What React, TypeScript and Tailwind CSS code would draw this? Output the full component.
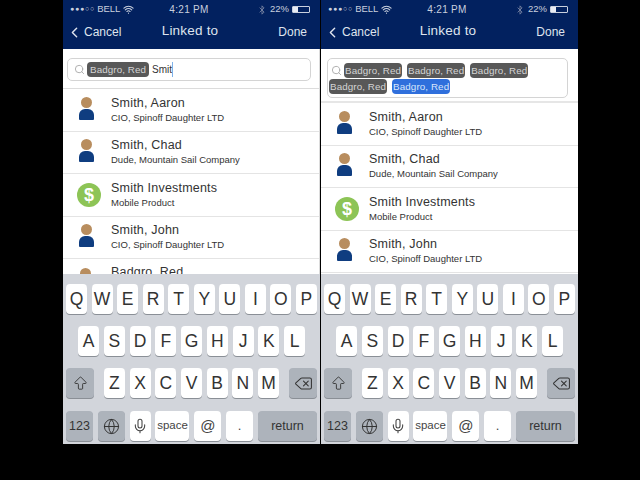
import { ArrowBigUp, Bluetooth, ChevronLeft, Delete, Globe, Mic, Search, Wifi } from "lucide-react";

const ROWS = [
  { name: "Smith, Aaron", sub: "CIO, Spinoff Daughter LTD", kind: "person" },
  { name: "Smith, Chad", sub: "Dude, Mountain Sail Company", kind: "person" },
  { name: "Smith Investments", sub: "Mobile Product", kind: "money" },
  { name: "Smith, John", sub: "CIO, Spinoff Daughter LTD", kind: "person" },
];

function Person() {
  return (
    <div className="-mt-[3px] flex w-[24px] flex-col items-center">
      <div className="h-[11px] w-[11px] rounded-full bg-[#b88d5e]" />
      <div className="mt-[1px] h-[11px] w-[15px] rounded-t-[6px] rounded-b-[1px] bg-[#0f3d80]" />
    </div>
  );
}

function Money() {
  return (
    <div className="ml-[3px] flex h-[24px] w-[24px] items-center justify-center rounded-full bg-[#8dc456] text-[18px] leading-none font-bold text-white">
      $
    </div>
  );
}

function Chip({ active, tight }: { active?: boolean; tight?: boolean }) {
  return (
    <span
      className={`rounded-[4px] text-[9.8px] leading-[15px] tracking-[0.1px] ${tight ? "px-[1px]" : "px-[3px]"} ${
        active ? "bg-[#2f6fdc] text-[#d8e6fb]" : "bg-[#585858] text-[#d4d4d4]"
      }`}
    >
      Badgro, Red
    </span>
  );
}

function Key({ label }: { label: string }) {
  return (
    <div className="flex h-[30px] w-[21px] items-center justify-center rounded-[4px] bg-white text-[17.5px] text-[#333] shadow-[0_1px_0_#8a8f96]">
      {label}
    </div>
  );
}

function KeyRow({ keys }: { keys: string }) {
  return (
    <>
      {keys.split("").map((k) => (
        <Key key={k} label={k} />
      ))}
    </>
  );
}

function Keyboard() {
  const dark = "flex h-[30px] items-center justify-center rounded-[4px] bg-[#adb3bb] text-[#333] shadow-[0_1px_0_#8a8f96]";
  const light = "flex h-[30px] items-center justify-center rounded-[4px] bg-white text-[#444] shadow-[0_1px_0_#8a8f96]";
  return (
    <div className="flex h-[170px] shrink-0 flex-col bg-[#d2d5db] pt-[10px]">
      <div className="flex justify-between px-[3px]">
        <KeyRow keys="QWERTYUIOP" />
      </div>
      <div className="mt-[12px] flex justify-between px-[15px]">
        <KeyRow keys="ASDFGHJKL" />
      </div>
      <div className="mt-[12px] flex items-center justify-between px-[3px]">
        <div className={`${dark} w-[28px]`}>
          <ArrowBigUp size={17} strokeWidth={1.3} />
        </div>
        <div className="flex gap-[4.7px]">
          <KeyRow keys="ZXCVBNM" />
        </div>
        <div className={`${dark} w-[28px]`}>
          <Delete size={19} strokeWidth={1.3} />
        </div>
      </div>
      <div className="mt-[13px] flex justify-between px-[3px]">
        <div className={`${dark} w-[27px] text-[12.5px]`}>123</div>
        <div className={`${dark} w-[27px]`}>
          <Globe size={17} strokeWidth={1.4} />
        </div>
        <div className={`${light} w-[21px]`}>
          <Mic size={16} strokeWidth={1.6} />
        </div>
        <div className={`${light} w-[34px] text-[11.5px]`}>space</div>
        <div className={`${light} w-[27px] text-[15px]`}>@</div>
        <div className={`${light} w-[27px] text-[13px]`}>.</div>
        <div className={`${dark} w-[59px] text-[12.5px]`}>return</div>
      </div>
    </div>
  );
}

function StatusBar() {
  return (
    <div className="flex h-[18px] shrink-0 items-center justify-between pt-[1px] pr-[10px] pl-[7px] text-[9.5px] text-[#c9d0de]">
      <div className="flex w-[78px] items-center">
        <span className="text-[7px] tracking-[0.8px]">●●●○○</span>
        <span className="ml-[2px]">BELL</span>
        <Wifi size={11} className="ml-[3px]" strokeWidth={2.4} />
      </div>
      <span className="text-[10px] font-medium tracking-[0.3px]">4:21 PM</span>
      <div className="flex w-[80px] items-center justify-end">
        <Bluetooth size={10} className="text-[#7f8aa6]" />
        <span className="ml-[3px]">22%</span>
        <div className="ml-[3px] h-[7px] w-[18px] rounded-[1px] border border-[#c9d0de]">
          <div className="h-full w-[5px] bg-[#e8ecf4]" />
        </div>
      </div>
    </div>
  );
}

function Phone({ full }: { full?: boolean }) {
  return (
    <div className="flex h-[444px] w-[257px] shrink-0 flex-col overflow-hidden bg-white">
      {/* Nav */}
      <div className="h-[49px] shrink-0 bg-[#02215f] text-[#dfe4ee]">
        <StatusBar />
        <div className="mt-[5px] flex items-center justify-between pr-[13px] pl-[3px]">
          <div className="flex w-[77px] items-center text-[12px]">
            <ChevronLeft size={17} strokeWidth={2} />
            <span className="ml-[1px]">Cancel</span>
          </div>
          <span className="-mt-[2px] text-[13.5px] tracking-[0.2px]">Linked to</span>
          <span className="w-[70px] text-right text-[12px]">Done</span>
        </div>
      </div>

      {/* Search box */}
      <div className={full ? "h-[54px] shrink-0 border-b-2 border-[#e6e6e6] pt-[9px] pr-[10px] pl-[6px]" : "h-[40px] shrink-0 border-r border-b border-[#dcdcdc] pt-[9px] pr-[8px] pl-[4px]"}>
        {full ? (
          <div className="flex h-[40px] flex-wrap content-start gap-x-[5px] gap-y-[1px] rounded-[5px] border border-[#d4d4d4] py-[4px] pl-[1px] text-[#585858] [font-size:0]">
            <Search size={11} className="mt-[2px] -mr-[3px] ml-[2px] text-[#aaa]" />
            <Chip tight />
            <Chip tight />
            <Chip tight />
            <Chip tight />
            <Chip tight active />
          </div>
        ) : (
          <div className="flex h-[23px] items-center rounded-[5px] border border-[#d4d4d4] pl-[6px]">
            <Search size={11} className="mr-[2px] text-[#aaa]" />
            <Chip />
            <span className="ml-[3px] text-[10px] text-[#333]">Smit</span>
            <span className="h-[15px] w-[1px] bg-[#7fb2ea]" />
          </div>
        )}
      </div>

      {/* Results */}
      <div className={full ? "min-h-0 flex-1 overflow-hidden" : "min-h-0 flex-1 overflow-hidden border-r border-[#dcdcdc]"}>
        {ROWS.map((row) => (
          <div key={row.name} className="flex h-[42.5px] items-center border-b border-[#e4e4e4] pl-[11px]">
            <div className="w-[37px] shrink-0">{row.kind === "money" ? <Money /> : <Person />}</div>
            <div>
              <p className="text-[12.5px] leading-[15px] tracking-[0.2px] text-[#333]">{row.name}</p>
              <p className="mt-[1px] text-[9.5px] leading-[12px] text-[#333]">{row.sub}</p>
            </div>
          </div>
        ))}
        {/* Row cut off by the keyboard */}
        {!full && (
          <div className="flex h-[15px] overflow-hidden pl-[11px]">
            <div className="mt-[9px] w-[37px] shrink-0">
              <div className="ml-[6px] h-[11px] w-[11px] rounded-full bg-[#b88d5e]" />
            </div>
            <p className="mt-[6px] text-[12.5px] leading-[15px] tracking-[0.2px] text-[#333]">Badgro, Red</p>
          </div>
        )}
      </div>

      <Keyboard />
    </div>
  );
}

export default function App() {
  return (
    <div className="flex h-[480px] w-[640px] gap-[1px] overflow-hidden bg-black pl-[63px] font-['Liberation_Sans',Arial,sans-serif]">
      <Phone />
      <Phone full />
    </div>
  );
}
